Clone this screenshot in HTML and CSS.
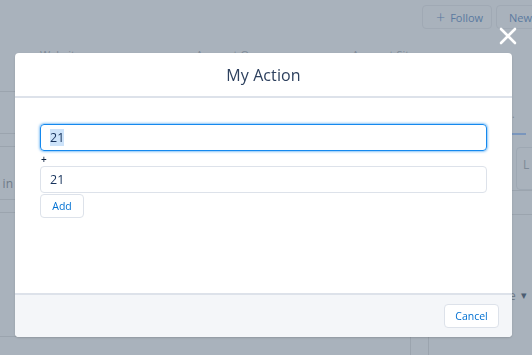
FILE: index.html
```html
<!DOCTYPE html>
<html>
<head>
<meta charset="utf-8">
<link rel="stylesheet" href="styles.css">
</head>
<body>
<div class="page">
  <div class="topbar">
    <div class="bg-btn follow"><span class="plus">+</span> Follow</div>
    <div class="bg-btn new">New Contact</div>
  </div>
  <div class="grid">
    <div class="left">
      <div class="thead">
        <span class="col c1">Website</span>
        <span class="col c2">Account Owner</span>
        <span class="col c3">Account Site</span>
      </div>
      <div class="row r1"></div>
      <div class="row r2"></div>
      <div class="row r3"><div class="clip">Type in</div></div>
      <div class="row r4"></div>
      <div class="row r5"></div>
      <div class="tail"><div class="vl"></div></div>
    </div>
    <div class="right">
      <div class="rhead"><span class="col">Industry</span></div>
      <div class="tabs"><span class="dot">.</span><span class="tabline"></span></div>
      <div class="rbtn-wrap"><div class="rbtn">L</div></div>
      <div class="rrow a"></div>
      <div class="rrow b"></div>
      <div class="rmenu"><span>Type</span><span class="caret">▾</span></div>
    </div>
  </div>
</div>

<div class="close-x">
  <svg width="18" height="18" viewBox="0 0 18 18"><path d="M2 2 L16 16 M16 2 L2 16" stroke="#fff" stroke-width="2.6" stroke-linecap="round"/></svg>
</div>

<div class="modal">
  <div class="m-header"><h2>My Action</h2></div>
  <div class="m-body">
    <div class="field focus"><span class="sel">21</span></div>
    <div class="op">+</div>
    <div class="field">21</div>
    <div class="btn add">Add</div>
  </div>
  <div class="m-footer"><div class="btn cancel">Cancel</div></div>
</div>
</body>
</html>
```
FILE: styles.css
```css
* { box-sizing: border-box; }
html, body { margin: 0; padding: 0; }
body {
  width: 532px; height: 355px; overflow: hidden;
  background: #a9b2bc;
  font-family: "Open Sans", "Noto Sans", sans-serif;
  color: #16325c;
}
.page { width: 532px; height: 355px; overflow: hidden; }
.topbar { height: 36px; padding-top: 5px; padding-left: 422px; display: flex; gap: 4px; white-space: nowrap; }
.bg-btn {
  height: 24px; border: 1px solid #a0a9b4; border-radius: 4px;
  font-size: 11px; color: #5b7aa0; display: flex; align-items: center;
  padding: 0 13px; flex-shrink: 0;
}
.bg-btn .plus { font-size: 16px; margin-right: 5px; line-height: 1; font-weight: 300; }
.follow { width: 70px; padding-left: 13px; }
.new { width: 80px; padding-left: 12px; }
.grid { display: grid; grid-template-columns: 430px 102px; }
.thead { height: 56px; border-bottom: 1px solid #9ba4ae; display: flex; padding-top: 11px; }
.col { font-size: 11px; color: #7e8a97; white-space: nowrap; }
.c1 { margin-left: 40px; width: 156px; }
.c2 { width: 156px; }
.c3 { width: 78px; }
.row { border-bottom: 1px solid #9ba4ae; }
.r1 { height: 42px; }
.r2 { height: 13px; }
.r3 { height: 53px; display: flex; align-items: center; }
.r4 { height: 13px; }
.r5 { height: 124px; }
.clip { width: 13px; display: flex; justify-content: flex-end; white-space: nowrap; font-size: 12px; color: #6f7b88; margin-top: 20px; }
.tail { height: 40px; }
.vl { margin-left: 410px; width: 19px; height: 100%; border-left: 1px solid #9ba4ae; border-right: 1px solid #9ba4ae; }
.rhead { height: 56px; padding-top: 11px; padding-left: 23px; }
.tabs { height: 40px; padding-left: 82px; padding-top: 9px; }
.dot { font-size: 10px; color: #7e8a97; }
.tabline { display: block; margin-top: 10px; width: 14px; height: 2px; background: #7a96bd; }
.rbtn-wrap { height: 60px; padding-left: 86px; padding-top: 15px; }
.rbtn { width: 30px; height: 43px; border: 1px solid #9ea8b3; border-radius: 4px; padding: 8px 0 0 6px; font-size: 12px; color: #7e8a97; }
.rrow { border-bottom: 1px solid #9ba4ae; }
.rrow.a { height: 29px; margin-top: -30px; }
.rrow.b { height: 24px; }
.rmenu { padding-top: 72px; padding-left: 59px; font-size: 12px; color: #6f7b88; display: flex; gap: 5px; white-space: nowrap; }
.rmenu .caret { color: #4c5d72; font-size: 11px; }

.close-x { position: fixed; left: 499px; top: 27px; width: 18px; height: 18px; }
.close-x svg { display: block; }

.modal {
  position: fixed; left: 15px; top: 53px; width: 497px; height: 284px;
  background: #fff; border-radius: 4px; overflow: hidden;
  display: flex; flex-direction: column;
  box-shadow: 0 1px 2px rgba(0,0,0,0.15);
}
.m-header { height: 45px; border-bottom: 2px solid #dde2ea; display: flex; align-items: center; justify-content: center; padding-top: 1px; }
.m-header h2 { margin: 0; font-weight: 400; font-size: 16px; color: #2d405e; letter-spacing: 0.1px; }
.m-body { flex: 1; padding: 26px 25px 0 25px; }
.field {
  height: 27px; border: 1px solid #dde2ea; border-radius: 4px;
  font-size: 12.5px; color: #16325c; display: flex; align-items: center; padding-left: 9px;
}
.field.focus { border-color: #1589ee; box-shadow: 0 0 3px #1589ee; }
.sel { background: #cde3fa; }
.op { height: 15px; font-size: 10px; line-height: 14px; padding-left: 1px; padding-top: 1px; color: #0f2340; font-weight: 600; }
.btn {
  border: 1px solid #dde2ea; border-radius: 4px; background: #fff;
  color: #0070d2; font-size: 10.5px; display: flex; align-items: center; justify-content: center;
}
.add { width: 44px; height: 24px; margin-top: 1px; }
.m-footer { height: 44px; border-top: 2px solid #dde2ea; background: #f4f6f9; display: flex; justify-content: flex-end; padding: 9px 13px 0 0; }
.cancel { width: 55px; height: 24px; }
```
